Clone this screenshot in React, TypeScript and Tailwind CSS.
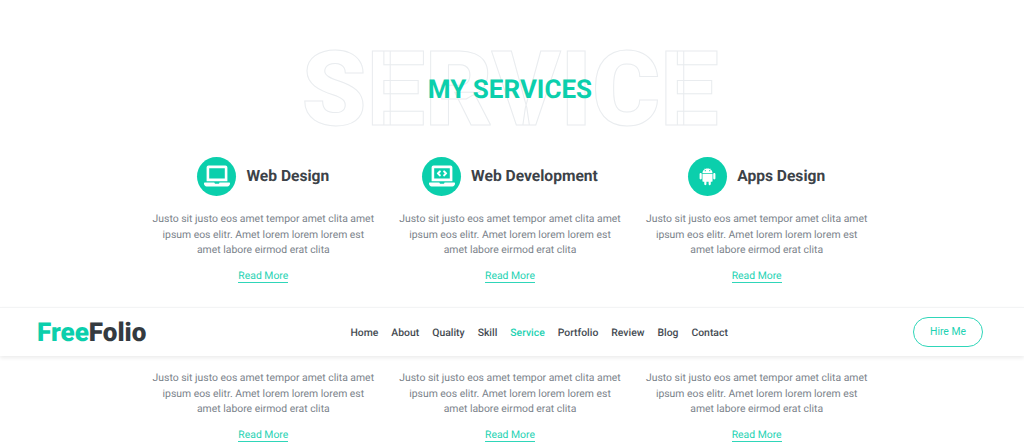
import { FaLaptop, FaLaptopCode } from 'react-icons/fa'
import { IoLogoAndroid } from 'react-icons/io'

const navLinks = ['Home', 'About', 'Quality', 'Skill', 'Service', 'Portfolio', 'Review', 'Blog', 'Contact']

const services = [
  { title: 'Web Design', icon: FaLaptop, size: 'text-[26px]' },
  { title: 'Web Development', icon: FaLaptopCode, size: 'text-[26px]' },
  { title: 'Apps Design', icon: IoLogoAndroid, size: 'text-[23px]' },
  { title: 'UI Design', icon: FaLaptop, size: 'text-[26px]' },
  { title: 'Web Development', icon: FaLaptopCode, size: 'text-[26px]' },
  { title: 'Apps Design', icon: IoLogoAndroid, size: 'text-[23px]' },
]

export default function App() {
  return (
    <main className="relative h-[446px] overflow-hidden bg-white pr-[4px] font-['Roboto',sans-serif] text-[#7a828a] [text-rendering:geometricPrecision]">
      {/* Title */}
      <div className="relative flex h-[156px] justify-center">
        <div className="mt-[31px] h-[120px] text-[104px] leading-[120px] font-black text-transparent [-webkit-text-stroke:1px_#e9ecef]">
          SERVICE
        </div>
        <h2 className="absolute top-[72px] text-[26px] leading-[36px] font-bold text-[#0bcfac]">MY SERVICES</h2>
      </div>

      {/* Services */}
      <div className="mx-auto grid w-[740px] grid-cols-3 gap-y-[40px]">
        {services.map((s, i) => {
          const Icon = s.icon
          return (
            <div key={i} className="flex h-[119px] flex-col items-center px-3 text-center">
              <div className="flex items-center">
                <div className="flex h-[39px] w-[39px] items-center justify-center rounded-full bg-[#0bcfac]">
                  <Icon className={`${s.size} text-white`} />
                </div>
                <h3 className="ml-[10px] pt-[1px] text-[15.6px] leading-[39px] font-bold text-[#3c4248]">{s.title}</h3>
              </div>
              <p className="mt-[15px] text-[10.4px] leading-[15.6px]">
                Justo sit justo eos amet tempor amet clita amet ipsum eos elitr. Amet lorem lorem lorem est amet labore eirmod erat clita
              </p>
              <a className="mt-[11px] border-b border-[#2fd6b9] text-[10.4px] leading-[13px] text-[#1dd2b2]">Read More</a>
            </div>
          )
        })}
      </div>

      {/* Sticky navbar */}
      <nav className="absolute top-[307px] left-0 flex h-[49px] w-full items-center justify-between border-t border-[#f3f4f5] bg-white pr-[41px] pl-[37px] shadow-[0_2px_4px_rgba(0,0,0,0.08)]">
        <div className="pt-[1px] text-[26px] leading-none font-black text-[#343a40]">
          <span className="text-[#0bcfac]">Free</span>Folio
        </div>
        <div className="ml-[19px] flex items-center gap-[13px] pt-[1px]">
          {navLinks.map((link) => (
            <a key={link} className={`text-[10.4px] font-medium ${link === 'Service' ? 'text-[#1dd2b2]' : 'text-[#454b52]'}`}>
              {link}
            </a>
          ))}
        </div>
        <button className="h-[30px] w-[70px] rounded-full border border-[#2fd6b9] text-[10.4px] text-[#1dd2b2]">Hire Me</button>
      </nav>
    </main>
  )
}
